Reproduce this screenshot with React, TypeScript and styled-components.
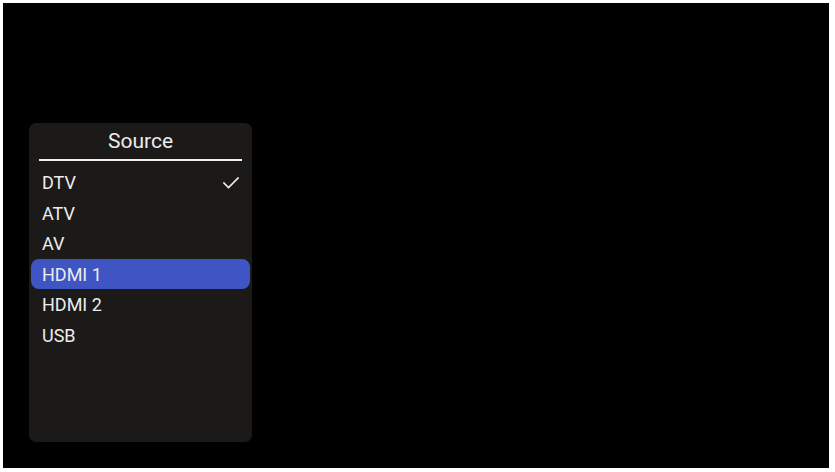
import styled, { createGlobalStyle } from 'styled-components'

const sources = ['DTV', 'ATV', 'AV', 'HDMI 1', 'HDMI 2', 'USB']
const current = 'DTV'
const focused = 'HDMI 1'

export default function App (): JSX.Element {
  return (
    <>
      <GlobalStyle />
      <Screen>
        <SourcePanel>
          <PanelTitle>Source</PanelTitle>
          <SourceList>
            {sources.map((name) => (
              <SourceRow key={name} $focused={name === focused}>
                <span>{name}</span>
                {name === current && <CheckIcon />}
              </SourceRow>
            ))}
          </SourceList>
        </SourcePanel>
      </Screen>
    </>
  )
}

function CheckIcon (): JSX.Element {
  return (
    <svg width='16' height='12' viewBox='0 0 16 12' fill='none'>
      <polyline points='1,6 5.5,10.5 15,1' stroke='#ececec' strokeWidth='1.6' strokeLinecap='square' />
    </svg>
  )
}

const GlobalStyle = createGlobalStyle`
  html, body {
    margin: 0;
    padding: 0;
    background: #ffffff;
  }

  body {
    font-family: Roboto, 'Noto Sans', sans-serif;
  }
`

const Screen = styled.div`
  box-sizing: border-box;
  width: 826px;
  height: 465px;
  margin: 3px;
  padding: 120px 0 0 26px;

  background: #000000;
`

const SourcePanel = styled.div`
  box-sizing: border-box;
  display: flex;
  flex-direction: column;

  width: 223px;
  height: 319px;
  padding: 0 2px;
  border-radius: 7px;

  background: #1b1a19;
`

const PanelTitle = styled.div`
  height: 36px;
  margin: 0 8px;
  border-bottom: 2px solid #f2f2f2;

  font-size: 21px;
  line-height: 36px;
  text-align: center;
  color: #ececec;
`

const SourceList = styled.div`
  display: flex;
  flex-direction: column;
  gap: 0.5px;

  margin-top: 6.5px;
`

const SourceRow = styled.div<{ $focused: boolean }>`
  display: flex;
  align-items: center;
  justify-content: space-between;

  height: 30px;
  padding: 0 11px 0 11px;
  border-radius: 8px;

  background: ${({ $focused }) => ($focused ? '#3f55c4' : 'transparent')};

  font-size: 18px;
  color: #ececec;
`
